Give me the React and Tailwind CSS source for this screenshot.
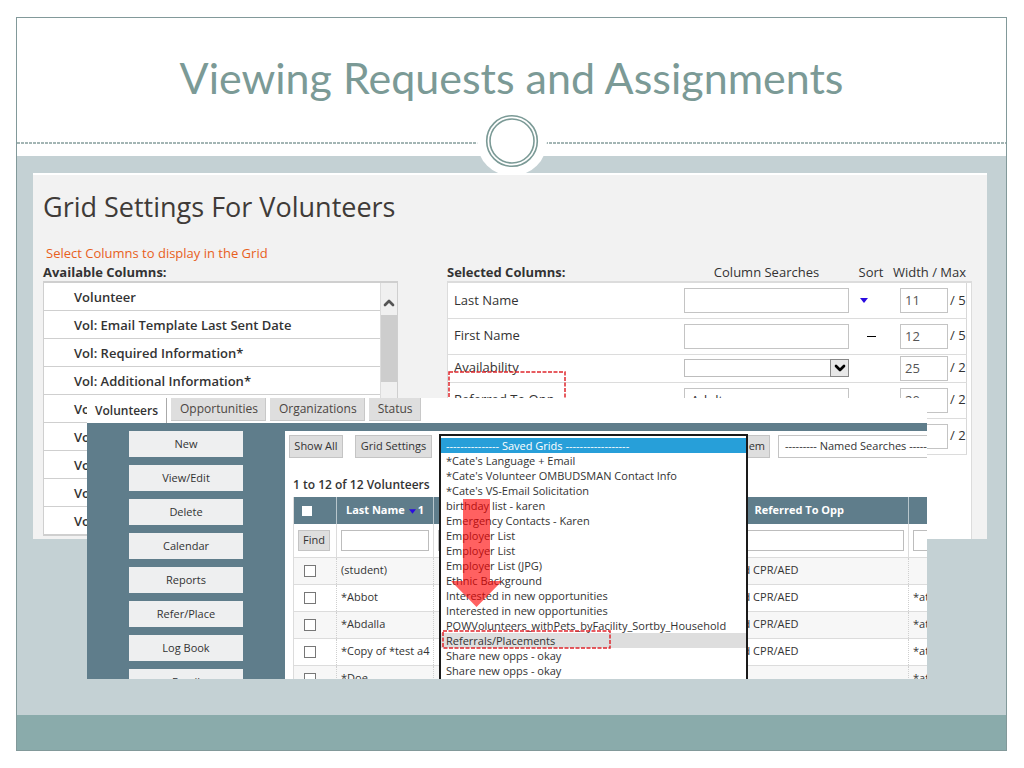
import React from 'react';
import { ChevronDown, ChevronUp } from 'lucide-react';

const availableColumns = [
  'Volunteer',
  'Vol: Email Template Last Sent Date',
  'Vol: Required Information*',
  'Vol: Additional Information*',
  'Vol: Address',
  'Vol: Birthday',
  'Vol: City',
  'Vol: Comments',
  'Vol: Country',
];

const selectedColumns = [
  { name: 'Last Name', search: 'text', sort: 'down', width: '11', max: '/ 5', height: 'h-[35px]' },
  { name: 'First Name', search: 'text', sort: 'none', width: '12', max: '/ 5', height: 'h-9' },
  { name: 'Availability', search: 'select', width: '25', max: '/ 2', height: 'h-7' },
  { name: 'Referred To Opp', search: 'text', value: 'Adult', width: '20', max: '/ 2', height: 'h-9' },
  { name: 'Status', search: 'text', width: '20', max: '/ 2', height: 'h-9' },
];

const tabs = ['Opportunities', 'Organizations', 'Status'];

const sideButtons = ['New', 'View/Edit', 'Delete', 'Calendar', 'Reports', 'Refer/Place', 'Log Book', 'Email'];

const savedGrids = [
  "*Cate's Language + Email",
  "*Cate's Volunteer OMBUDSMAN Contact Info",
  "*Cate's VS-Email Solicitation",
  'birthday list - karen',
  'Emergency Contacts - Karen',
  'Employer List',
  'Employer List',
  'Employer List (JPG)',
  'Ethnic Background',
  'Interested in new opportunities',
  'Interested in new opportunities',
  'POWVolunteers_withPets_byFacility_Sortby_Household',
  'Referrals/Placements',
  'Share new opps - okay',
  'Share new opps - okay',
];

const volunteers = [
  { name: '(student)', opp: 'd CPR/AED', note: '' },
  { name: '*Abbot', opp: 'd CPR/AED', note: '*at' },
  { name: '*Abdalla', opp: 'd CPR/AED', note: '*at' },
  { name: '*Copy of *test a4', opp: 'd CPR/AED', note: '*at' },
  { name: '*Doe', opp: '', note: '*at' },
];

const SortIcon = ({ sort }) => {
  if (sort === 'down') {
    return (
      <svg className="ml-[11px] h-[5px] w-2" viewBox="0 0 8 5">
        <path d="M0 0h8L4 5z" fill="#2a0be0" />
      </svg>
    );
  }
  if (sort === 'none') {
    return <span className="ml-[18px] block h-px w-[9px] bg-black"></span>;
  }
  return null;
};

const Highlight = ({ className }) => (
  <svg className={`pointer-events-none absolute ${className}`}>
    <rect
      x="1"
      y="1"
      className="h-[calc(100%-2px)] w-[calc(100%-2px)]"
      fill="none"
      stroke="#e0262c"
      strokeWidth="1.5"
      strokeDasharray="4 1.5"
    />
  </svg>
);

const AvailableList = () => (
  <div className="w-[355px] shrink-0">
    <h3 className="text-[13px] leading-[18px] font-bold">Available Columns:</h3>
    <div className="flex border border-t-2 border-[#cfcfcf]">
      <ul className="flex-1 bg-white">
        {availableColumns.map((column) => (
          <li
            key={column}
            className="h-7 border-b border-[#cfcfcf] pl-[30px] text-[13px] leading-7 font-semibold"
          >
            {column}
          </li>
        ))}
      </ul>
      <div className="w-[17px] border-l border-[#dcdcdc] bg-[#f0f0f0]">
        <div className="flex h-8 items-center justify-center pt-2">
          <ChevronUp className="size-4 text-[#555]" strokeWidth={4} />
        </div>
        <div className="h-[67px] bg-[#cdcdcd]"></div>
      </div>
    </div>
  </div>
);

const SelectedList = () => (
  <div className="relative min-w-0 flex-1">
    <div className="flex text-[13px] leading-[18px]">
      <h3 className="w-[237px] font-bold">Selected Columns:</h3>
      <span className="w-[165px] text-center">Column Searches</span>
      <span className="w-11 text-center">Sort</span>
      <span className="text-nowrap">Width / Max</span>
    </div>
    <div className="h-full border border-t-2 border-[#dcdcdc] bg-white pr-1">
      <table className="w-full table-fixed border-r border-[#d8d8d8] text-[13px]">
        <tbody>
          {selectedColumns.map((col) => (
            <tr key={col.name} className={`border-b border-[#dcdcdc] ${col.height}`}>
              <td className="w-[236px] pl-[6px]">{col.name}</td>
              <td className="w-[165px]">
                {col.search === 'select' ? (
                  <div className="relative h-[18px]">
                    <select aria-label={col.name} className="block h-full w-full appearance-none border border-[#bdbdbd]">
                      <option></option>
                    </select>
                    <span className="pointer-events-none absolute inset-y-0 right-0 flex w-[19px] items-center justify-center border border-[#888] bg-[#e8e8e8]">
                      <ChevronDown className="size-4 text-black" strokeWidth={4} />
                    </span>
                  </div>
                ) : (
                  <input
                    type="text"
                    aria-label={`Search ${col.name}`}
                    defaultValue={col.value}
                    className="block h-[25px] w-full border border-[#c4c4c4] px-[6px]"
                  />
                )}
              </td>
              <td className="w-11">
                <SortIcon sort={col.sort} />
              </td>
              <td>
                <div className="flex items-center gap-[2px] pl-[7px] text-nowrap">
                  <input
                    type="text"
                    aria-label={`Width of ${col.name}`}
                    defaultValue={col.width}
                    className="h-[25px] w-12 shrink-0 border border-[#c4c4c4] px-1 text-[#555]"
                  />
                  <span>{col.max}</span>
                </div>
              </td>
            </tr>
          ))}
        </tbody>
      </table>
    </div>
    <Highlight className="top-[108px] left-px h-20 w-[118px]" />
  </div>
);

const GridSettings = () => (
  <section className="mr-[19px] ml-4 h-[366px] overflow-hidden border-t-2 border-white bg-[#f2f2f2] pt-[14px] pr-[15px] pl-[10px]">
    <h2 className="text-[27px] leading-9 text-[#3f3b38]">Grid Settings For Volunteers</h2>
    <p className="mt-[18px] pl-[3px] text-[13px] leading-5 text-[#e8601c]">Select Columns to display in the Grid</p>
    <div className="flex gap-[49px]">
      <AvailableList />
      <SelectedList />
    </div>
  </section>
);

const SavedGrids = () => (
  <div className="absolute top-[36px] left-[352px] w-[309px]">
    <select
      size={16}
      aria-label="Saved Grids"
      className="block h-[260px] w-full appearance-none overflow-hidden border-2 border-[#1a1a1a] bg-white pt-[2px] text-[11px]"
    >
      <option className="h-[15px] min-h-0 bg-[#279fd9] px-[5px] py-0 leading-[15px] text-white">
        --------------- Saved Grids ------------------
      </option>
      {savedGrids.map((grid, i) => (
        <option
          key={i}
          className={`h-[15px] min-h-0 px-[5px] py-0 leading-[15px] ${grid === 'Referrals/Placements' ? 'bg-[#dedede]' : ''}`}
        >
          {grid}
        </option>
      ))}
    </select>
    <Highlight className="top-[196px] left-[3px] h-[19px] w-[169px]" />
    <svg className="pointer-events-none absolute top-[65px] left-3 h-[108px] w-[51px]" viewBox="0 0 51 108">
      <path d="M12 0h27v82h12L25.500 108 0 82h12z" fill="#ff0000" fillOpacity="0.62" />
    </svg>
  </div>
);

const VolunteerTable = () => (
  <table className="w-full table-fixed border-l border-[#dcdcdc] text-[11px]">
    <thead>
      <tr className="h-[27px] bg-[#5f7d8b] text-white">
        <th className="w-[43px] border-r border-[#b8c6cc]">
          <input type="checkbox" aria-label="Select all" className="ml-2 block size-[10px] appearance-none bg-white" />
        </th>
        <th className="w-[97px] border-r border-[#b8c6cc] text-nowrap">
          Last Name
          <svg className="mr-[2px] ml-1 inline h-[5px] w-[7px]" viewBox="0 0 8 5">
            <path d="M0 0h8L4 5z" fill="#2a0be0" />
          </svg>
          1
        </th>
        <th className="w-[257px]"></th>
        <th className="w-[218px] border-r border-[#b8c6cc]">Referred To Opp</th>
        <th></th>
      </tr>
      <tr className="h-[33px] border-b border-[#dcdcdc]">
        <td className="border-r border-[#dcdcdc] pl-1">
          <button type="button" className="h-[21px] w-8 border border-[#c4c4c4] bg-[#dedede]">Find</button>
        </td>
        <td className="border-r border-[#dcdcdc] px-1">
          <input type="text" aria-label="Last Name" className="block h-[21px] w-full border border-[#bdbdbd]" />
        </td>
        <td className="px-1">
          <input type="text" aria-label="First Name" className="block h-[21px] w-full border border-[#bdbdbd]" />
        </td>
        <td className="border-r border-[#dcdcdc] pr-1">
          <input type="text" aria-label="Referred To Opp" className="block h-[21px] w-full border border-[#bdbdbd]" />
        </td>
        <td className="pl-1">
          <input type="text" aria-label="Notes" className="block h-[21px] w-full border border-r-0 border-[#bdbdbd]" />
        </td>
      </tr>
    </thead>
    <tbody>
      {volunteers.map((row, i) => (
        <tr key={row.name} className={`h-[27px] border-b border-[#dcdcdc] ${i % 2 === 0 ? 'bg-[#f7f7f7]' : 'bg-white'}`}>
          <td className="border-r border-dotted border-[#cfcfcf] pl-[10px]">
            <input type="checkbox" aria-label={row.name} className="block size-3 appearance-none border border-[#777] bg-white" />
          </td>
          <td className="border-r border-dotted border-[#cfcfcf] pl-1 text-nowrap">{row.name}</td>
          <td></td>
          <td className="border-r border-dotted border-[#cfcfcf] pl-[53px]">{row.opp}</td>
          <td className="overflow-hidden pl-1">{row.note}</td>
        </tr>
      ))}
    </tbody>
  </table>
);

const VolunteerGrid = () => (
  <section className="relative -mt-[141px] mr-[79px] ml-[70px] h-[281px] overflow-hidden bg-white text-[11px]">
    <nav className="flex h-[25px] items-start gap-1 text-[12px]">
      <a href="#volunteers" className="h-[25px] w-20 border-r border-[#aaa] text-center leading-[26px] font-semibold">
        Volunteers
      </a>
      {tabs.map((tab) => (
        <a
          key={tab}
          href={`#${tab.toLowerCase()}`}
          className="h-[23px] border-r border-b border-[#c8c8c8] bg-[#dedede] pr-[7px] pl-[9px] leading-[22px] text-[#4c4643]"
        >
          {tab}
        </a>
      ))}
    </nav>
    <div className="flex bg-[#5f7d8b] pt-2">
      <div className="flex w-[198px] shrink-0 flex-col items-center gap-2">
        {sideButtons.map((label) => (
          <button key={label} type="button" className="h-[26px] w-[114px] bg-[#eeeff0] leading-[26px]">
            {label}
          </button>
        ))}
      </div>
      <div className="min-w-0 flex-1 bg-white pt-1">
        <div className="flex h-[23px] items-stretch pl-1">
          <button type="button" className="w-[54px] border border-[#c4c4c4] bg-[#dedede] text-nowrap">Show All</button>
          <button type="button" className="ml-3 w-[77px] border border-[#c4c4c4] bg-[#dedede] text-nowrap">
            Grid Settings
          </button>
          <button type="button" className="ml-auto w-20 border border-[#c4c4c4] bg-[#dedede] pr-1 text-right">em</button>
          <div className="ml-2 w-[149px] overflow-hidden">
            <select
              aria-label="Named Searches"
              className="h-full w-[200px] appearance-none border border-[#c4c4c4] bg-white px-[6px]"
            >
              <option>--------- Named Searches ------</option>
            </select>
          </div>
        </div>
        <p className="mt-[17px] pl-2 text-[12px] leading-5 font-semibold">1 to 12 of 12 Volunteers</p>
        <div className="mt-[2px] pl-2">
          <VolunteerTable />
        </div>
      </div>
    </div>
    <SavedGrids />
  </section>
);

const App = () => {
  return (
    <div className="bg-white pt-[17px] pr-[17px] pb-[17px] pl-4 font-['Open_Sans',sans-serif] text-[#333]">
      <main className="relative border border-[#82999a]">
        <header className="h-[138px]">
          <h1 className="h-[124px] text-center font-['Lato',sans-serif] text-[43px] leading-[120px] text-[#7b9a96]">
            Viewing Requests and Assignments
          </h1>
          <div className="h-[2px] bg-[repeating-linear-gradient(90deg,#a3b5b4_0_3px,#fff_3px_4px)]"></div>
        </header>
        <svg className="absolute top-[88px] left-1/2 size-[70px] -translate-x-1/2" viewBox="0 0 70 70">
          <circle cx="35" cy="35" r="35" fill="#fff" />
          <circle cx="35" cy="35" r="25.300" fill="none" stroke="#7b9a96" strokeWidth="1.600" />
          <circle cx="35" cy="35" r="22" fill="none" stroke="#7b9a96" strokeWidth="1.600" />
        </svg>
        <div className="bg-[#c4d1d4] pt-[17px] pb-9">
          <div className="relative">
            <GridSettings />
            <VolunteerGrid />
          </div>
        </div>
        <footer className="h-[35px] bg-[#8aabab]"></footer>
      </main>
    </div>
  );
};

export default App;
